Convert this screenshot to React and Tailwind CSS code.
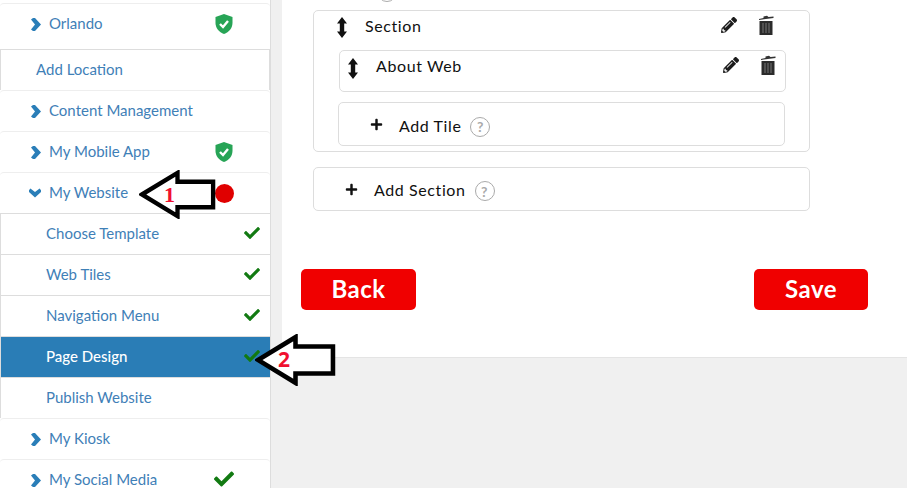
import { FaCheck, FaPencilAlt, FaPlus } from 'react-icons/fa';

function ChevronRight() {
  return (
    <svg width="10" height="13" viewBox="0 0 10 13" className="block">
      <path d="M0 1.5 L2 0 L4 0 L10 6.5 L4 13 L2 13 L0 11.5 L4 6.5 Z" fill="#2a7eb8" />
    </svg>
  );
}

function ChevronDown() {
  return (
    <svg width="13" height="10" viewBox="0 0 13 10" className="block">
      <path d="M1.5 0 L0 2 L0 4 L6.5 10 L13 4 L13 2 L11.5 0 L6.5 4 Z" fill="#2a7eb8" />
    </svg>
  );
}

function Shield() {
  return (
    <svg width="18" height="20" viewBox="0 0 18 20" className="block">
      <path d="M9 0 L17.5 3 V9 C17.5 14 14 18 9 20 C4 18 .5 14 .5 9 V3 Z" fill="#27a456" />
      <path d="M5 10 L8 13 L13 7" fill="none" stroke="#fff" strokeWidth="2.4" />
    </svg>
  );
}

function Trash() {
  return (
    <svg width="16" height="20" viewBox="0 0 16 20" className="block">
      <path d="M1 4 L5.5 3 V1.5 L9 .8 L10.5 2 L15.5 1.5 V3 L1 5 Z" fill="#333" />
      <path d="M1.5 6 H14.5 V20 H1.5 Z" fill="#2b2b2b" />
      <path d="M5 8 V18 M8 8 V18 M11 8 V18" stroke="#777" strokeWidth="1" />
    </svg>
  );
}

function UpDown() {
  return (
    <svg width="12" height="21" viewBox="0 0 12 21" className="block">
      <path d="M6 0 L11 6.5 H8.2 V14.5 H11 L6 21 L1 14.5 H3.8 V6.5 H1 Z" fill="#111" />
    </svg>
  );
}

function Help() {
  return (
    <span className="flex h-[20px] w-[20px] shrink-0 items-center justify-center rounded-full border border-[#aaa] text-[14px] font-bold text-[#aaa]">
      ?
    </span>
  );
}

function NavItem({ label, badge, open }) {
  return (
    <div className="flex h-[41px] items-center rounded-[4px] border-t border-[#eeeeee] pb-[2px] pl-[29px]">
      <span className="flex w-[20px] justify-end pr-[8px] pt-[2px]">
        {open ? <ChevronDown /> : <ChevronRight />}
      </span>
      <span className="text-[15px] text-[#3f80b7]">{label}</span>
      {badge}
    </div>
  );
}

function SubItem({ label, active, check = true }) {
  return (
    <div
      className={
        'flex h-[41px] items-center border-t border-l border-[#dddddd] pb-[2px] pl-[45px] pr-[10px] text-[15px] ' +
        (active ? 'bg-[#2a7db6] font-medium text-white' : 'text-[#3f80b7]')
      }
    >
      <span className="flex-1">{label}</span>
      {check && <FaCheck size={16} className="text-[#127a12]" />}
    </div>
  );
}

function Sidebar() {
  return (
    <aside className="w-[270px] shrink-0 bg-white pt-[3px] font-['Lato',sans-serif]">
      <div className="flex h-[46px] items-center rounded-[4px] border-t border-[#eeeeee] pb-[6px] pl-[29px]">
        <span className="flex w-[20px] justify-end pr-[8px] pt-[2px]">
          <ChevronRight />
        </span>
        <span className="text-[15px] text-[#3f80b7]">Orlando</span>
        <span className="ml-auto mr-[37px]"><Shield /></span>
      </div>
      <div className="flex h-[41px] items-center border-x border-t border-[#dddddd] pb-[2px] pl-[35px] text-[15px] text-[#3f80b7]">
        Add Location
      </div>
      <NavItem label="Content Management" />
      <NavItem label="My Mobile App" badge={<span className="ml-auto mr-[37px] mt-[2px]"><Shield /></span>} />
      <NavItem
        label="My Website"
        open
        badge={<span className="ml-auto mr-[36px] mt-[2px] h-[19px] w-[19px] rounded-full bg-[#e00000]" />}
      />
      <SubItem label="Choose Template" />
      <SubItem label="Web Tiles" />
      <SubItem label="Navigation Menu" />
      <SubItem label="Page Design" active />
      <SubItem label="Publish Website" check={false} />
      <NavItem label="My Kiosk" />
      <NavItem
        label="My Social Media"
        badge={<FaCheck size={20} className="ml-auto mr-[36px] text-[#127a12]" />}
      />
    </aside>
  );
}

function Actions() {
  return (
    <div className="ml-auto flex items-center gap-[21px]">
      <FaPencilAlt size={16} className="text-[#1c1c1c]" />
      <Trash />
    </div>
  );
}

function Main() {
  return (
    <main className="flex flex-1 flex-col font-['Lato',sans-serif] text-[16px] tracking-[0.6px] text-[#111]">
      <section className="h-[358px] border-b border-[#e4e4e4] bg-white pl-[31px]">
        <div className="h-[10px] overflow-hidden pl-[64px]">
          <div className="-mt-[18px] h-[20px] w-[20px] rounded-full border border-[#aaa]" />
        </div>
        <div className="h-[142px] w-[497px] rounded-[5px] border border-[#dddddd] pl-[24px]">
          <div className="-ml-[2px] flex h-[39px] items-start pt-[4px] pr-[35px]">
            <span className="pt-[2px]"><UpDown /></span>
            <span className="ml-[17px] -mt-[1px]">Section</span>
            <Actions />
          </div>
          <div className="ml-px flex h-[42px] w-[447px] items-start rounded-[5px] border border-[#dddddd] pt-[4px] pl-[7px] pr-[9px]">
            <span className="pt-[3px]"><UpDown /></span>
            <span className="ml-[17px] -mt-[1px]">About Web</span>
            <Actions />
          </div>
          <div className="mt-[10px] flex h-[44px] w-[447px] items-center rounded-[5px] border border-[#dddddd] pl-[31px]">
            <FaPlus size={13} className="text-[#111]" />
            <span className="ml-[16px] mr-[9px] pt-[3px]">Add Tile</span>
            <span className="pt-[5px]"><Help /></span>
          </div>
        </div>
        <div className="mt-[15px] flex h-[44px] w-[497px] items-center rounded-[5px] border border-[#dddddd] pl-[31px]">
          <FaPlus size={13} className="text-[#111]" />
          <span className="ml-[16px] mr-[9px] pt-[2px]">Add Section</span>
          <span className="pt-[4px]"><Help /></span>
        </div>
        <div className="-ml-[12px] mt-[58px] flex w-[567px] justify-between font-bold">
          <button className="h-[41px] w-[115px] rounded-[5px] bg-[#f00000] pb-[2px] text-[24px] tracking-[0.5px] text-white">Back</button>
          <button className="h-[41px] w-[114px] rounded-[5px] bg-[#f00000] pb-[2px] text-[24px] tracking-[0.5px] text-white">Save</button>
        </div>
      </section>
      <div className="flex-1 bg-[#f0f0f0]" />
    </main>
  );
}

function Callout({ className, n, number }) {
  return (
    <div className={'absolute ' + className}>
      <svg width="100%" height="100%" viewBox="0 0 80 50" preserveAspectRatio="none" className="block">
        <path d="M3 25 L40 3 V12 H77 V38 H40 V47 Z" fill="#fff" stroke="#000" strokeWidth="4.5" strokeLinejoin="miter" />
      </svg>
      <span className={'absolute font-bold leading-none text-[#f01030] ' + number}>{n}</span>
    </div>
  );
}

export default function App() {
  return (
    <div className="relative flex h-[488px] w-[907px] overflow-hidden bg-[#f0f0f0]">
      <Sidebar />
      <div className="w-[12px] shrink-0 border-l border-[#dddddd] bg-[#f0f0f0]" />
      <Main />
      <Callout className="left-[139px] top-[170px] h-[49px] w-[77px]" n="1" number="left-[25px] top-[14px] font-['Liberation_Serif',serif] text-[22px]" />
      <Callout className="left-[255px] top-[334px] h-[52px] w-[81px]" n="2" number="left-[23px] top-[15px] font-['Open_Sans',sans-serif] text-[21px]" />
    </div>
  );
}
